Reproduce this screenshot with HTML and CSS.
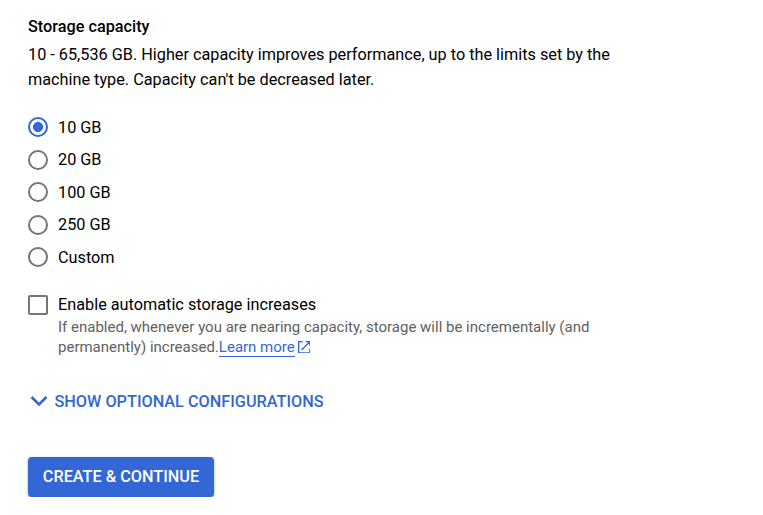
FILE: index.html
```html
<!DOCTYPE html>
<html lang="en">
<head>
<meta charset="utf-8">
<title>Storage capacity</title>
<link rel="stylesheet" href="styles.css">
</head>
<body>
<main class="form">
  <h2 class="title">Storage capacity</h2>
  <p class="intro">10 - 65,536 GB. Higher capacity improves performance, up to the limits set by the<br>machine type. Capacity can't be decreased later.</p>
  <div class="options">
    <label class="option"><span class="radio selected"></span>10 GB</label>
    <label class="option"><span class="radio"></span>20 GB</label>
    <label class="option"><span class="radio"></span>100 GB</label>
    <label class="option"><span class="radio"></span>250 GB</label>
    <label class="option"><span class="radio"></span>Custom</label>
  </div>
  <div class="auto">
    <span class="checkbox"></span>
    <div>
      <div class="auto-label">Enable automatic storage increases</div>
      <p class="hint">If enabled, whenever you are nearing capacity, storage will be incrementally (and<br>permanently) increased.<a class="link">Learn more</a><svg class="external" viewBox="0 0 13 13"><path d="M5 .7H.7v11.6h11.6V8M8 .7h4.3V5M12.3.7 3.7 9.3" /></svg></p>
    </div>
  </div>
  <div class="toggle"><svg class="chevron" viewBox="0 0 18 12"><path d="M1.5 2 9 9.5 16.5 2" /></svg>SHOW OPTIONAL CONFIGURATIONS</div>
  <button class="submit">CREATE &amp; CONTINUE</button>
</main>
</body>
</html>
```
FILE: styles.css
```css
* { box-sizing: border-box; }
body { margin: 0; background: #fff; color: #000; font: 16.25px/25px Roboto, sans-serif; }
.form { padding: 14px 28px 0; }
.title { margin: 0; font-size: 16.25px; font-weight: 500; line-height: 25px; }
.intro { margin: 3px 0 0; white-space: nowrap; }
.options { display: grid; grid-auto-rows: 32.5px; margin-top: 19px; }
.option { display: flex; align-items: center; gap: 10px; }
.radio { width: 20px; height: 20px; border: 2px solid #757575; border-radius: 50%; }
.radio.selected { border-color: #3367d6; background: radial-gradient(circle, #3367d6 0 4.7px, #fff 5.3px); }
.auto { display: flex; gap: 10px; margin-top: 18px; }
.checkbox { width: 20px; height: 20px; margin-top: 3px; border: 2px solid #757575; border-radius: 2px; }
.hint { margin: 0; color: #616161; font-size: 15px; line-height: 20px; white-space: nowrap; }
.link { color: #3367d6; border-bottom: 1px solid #3367d6; }
.external { width: 12.5px; height: 12.5px; margin-left: 3px; vertical-align: -1.5px; fill: none; stroke: #3367d6; stroke-width: 1.4; }
.toggle { display: flex; align-items: center; gap: 6.5px; margin-top: 32px; color: #3367d6; font-weight: 500; }
.chevron { width: 18px; height: 12px; margin-left: 2px; fill: none; stroke: currentColor; stroke-width: 2.5; }
.submit { display: block; width: 186px; height: 40px; margin-top: 43px; padding: 0; border: 0; border-radius: 4px; background: #3367d6; color: #fff; font: 500 16.25px Roboto, sans-serif; box-shadow: 0 1px 3px rgba(0,0,0,.35); }
```
